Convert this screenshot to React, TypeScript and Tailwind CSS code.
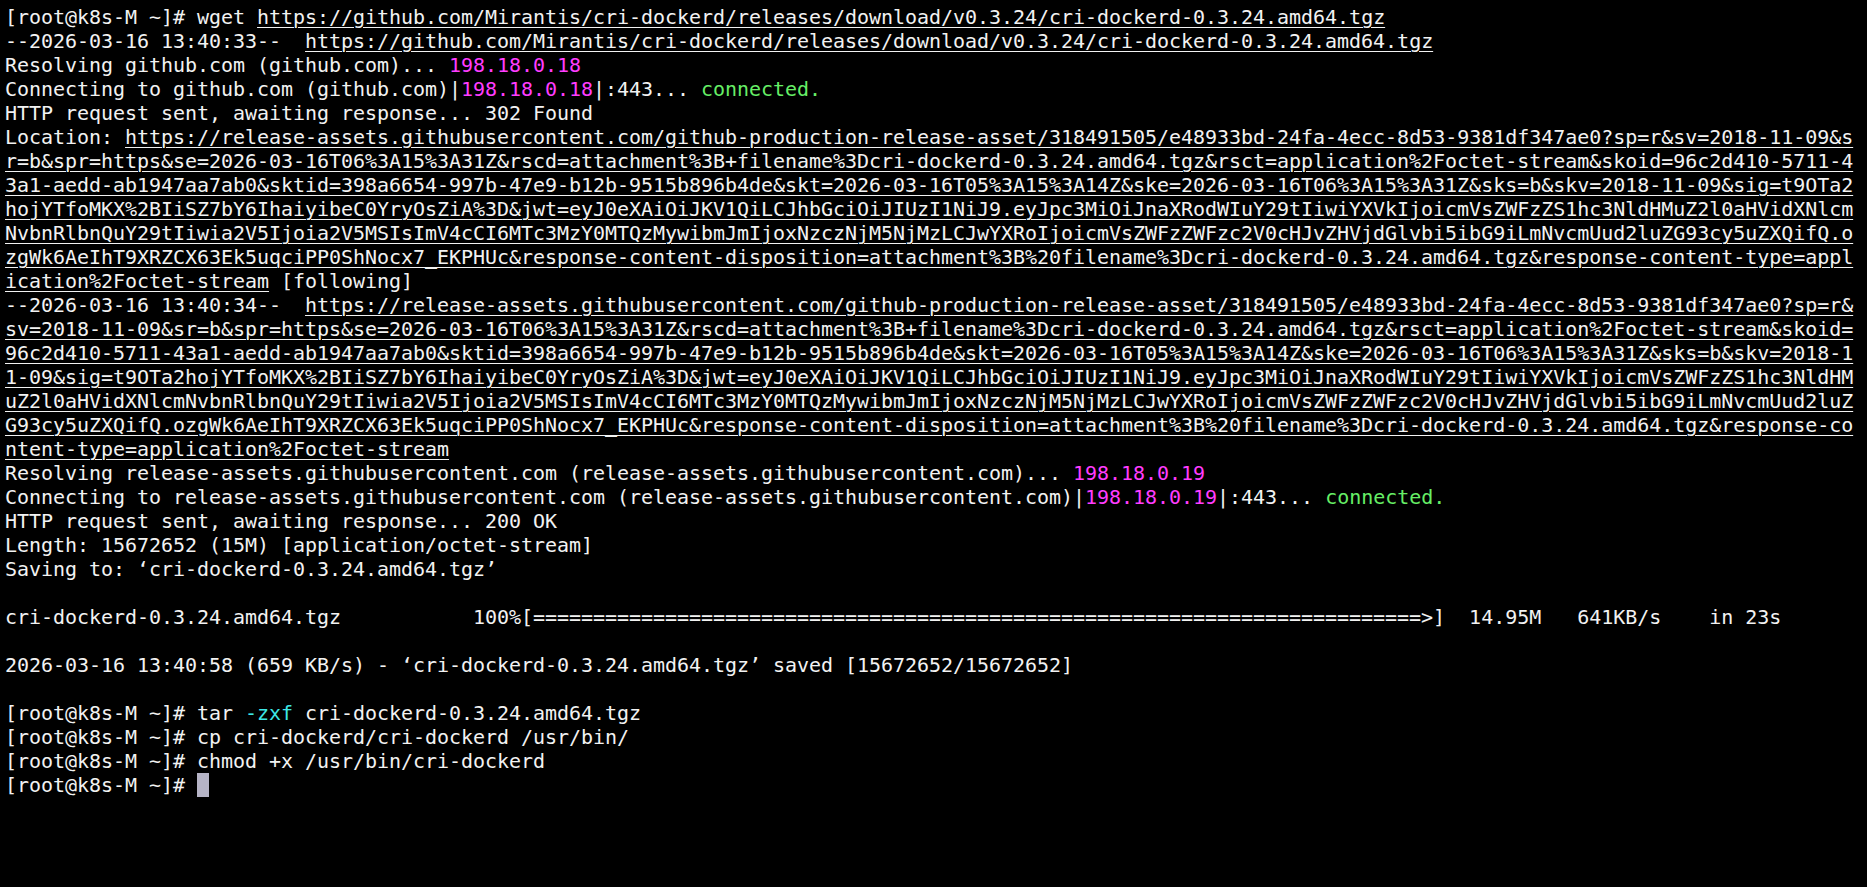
type Tone = "ip" | "ok" | "opt";

interface Seg {
    t: string;
    tone?: Tone;
    u?: boolean; // underlined link
}

const COLS = 154;
const PROMPT = "[root@k8s-M ~]# ";
const FILE = "cri-dockerd-0.3.24.amd64.tgz";

const GH_URL = `https://github.com/Mirantis/cri-dockerd/releases/download/v0.3.24/${FILE}`;

const ASSET_URL =
    "https://release-assets.githubusercontent.com/github-production-release-asset/318491505/e48933bd-24fa-4ecc-8d53-9381df347ae0" +
    "?sp=r&sv=2018-11-09&sr=b&spr=https&se=2026-03-16T06%3A15%3A31Z&rscd=attachment%3B+filename%3D" + FILE +
    "&rsct=application%2Foctet-stream&skoid=96c2d410-5711-43a1-aedd-ab1947aa7ab0&sktid=398a6654-997b-47e9-b12b-9515b896b4de" +
    "&skt=2026-03-16T05%3A15%3A14Z&ske=2026-03-16T06%3A15%3A31Z&sks=b&skv=2018-11-09&sig=t9OTa2hojYTfoMKX%2BIiSZ7bY6IhaiyibeC0YryOsZiA%3D" +
    "&jwt=eyJ0eXAiOiJKV1QiLCJhbGciOiJIUzI1NiJ9.eyJpc3MiOiJnaXRodWIuY29tIiwiYXVkIjoicmVsZWFzZS1hc3NldHMuZ2l0aHVidXNlcmNvbnRlbnQuY29tIiwia2V5Ijoia2V5MSIsImV4cCI6MTc3MzY0MTQzMywibmJmIjoxNzczNjM5NjMzLCJwYXRoIjoicmVsZWFzZWFzc2V0cHJvZHVjdGlvbi5ibG9iLmNvcmUud2luZG93cy5uZXQifQ.ozgWk6AeIhT9XRZCX63Ek5uqciPP0ShNocx7_EKPHUc" +
    "&response-content-disposition=attachment%3B%20filename%3D" + FILE +
    "&response-content-type=application%2Foctet-stream";

// break a logical line into terminal rows of COLS characters
function wrap(segs: Seg[]): Seg[][] {
    const rows: Seg[][] = [[]];
    let col = 0;
    for (const s of segs) {
        let rest = s.t;
        while (rest.length > 0) {
            if (col === COLS) {
                rows.push([]);
                col = 0;
            }
            const take = rest.slice(0, COLS - col);
            rows[rows.length - 1].push({ ...s, t: take });
            col += take.length;
            rest = rest.slice(take.length);
        }
    }
    return rows;
}

const bar = "100%[" + "=".repeat(74) + ">]";

const logical: Seg[][] = [
    [{ t: PROMPT + "wget " }, { t: GH_URL, u: true }],
    [{ t: "--2026-03-16 13:40:33--  " }, { t: GH_URL, u: true }],
    [{ t: "Resolving github.com (github.com)... " }, { t: "198.18.0.18", tone: "ip" }],
    [
        { t: "Connecting to github.com (github.com)|" },
        { t: "198.18.0.18", tone: "ip" },
        { t: "|:443... " },
        { t: "connected.", tone: "ok" },
    ],
    [{ t: "HTTP request sent, awaiting response... 302 Found" }],
    [{ t: "Location: " }, { t: ASSET_URL, u: true }, { t: " [following]" }],
    [{ t: "--2026-03-16 13:40:34--  " }, { t: ASSET_URL, u: true }],
    [
        { t: "Resolving release-assets.githubusercontent.com (release-assets.githubusercontent.com)... " },
        { t: "198.18.0.19", tone: "ip" },
    ],
    [
        { t: "Connecting to release-assets.githubusercontent.com (release-assets.githubusercontent.com)|" },
        { t: "198.18.0.19", tone: "ip" },
        { t: "|:443... " },
        { t: "connected.", tone: "ok" },
    ],
    [{ t: "HTTP request sent, awaiting response... 200 OK" }],
    [{ t: "Length: 15672652 (15M) [application/octet-stream]" }],
    [{ t: `Saving to: ‘${FILE}’` }],
    [],
    [{ t: FILE + " ".repeat(11) + bar + "  14.95M   641KB/s    in 23s" }],
    [],
    [{ t: `2026-03-16 13:40:58 (659 KB/s) - ‘${FILE}’ saved [15672652/15672652]` }],
    [],
    [{ t: PROMPT + "tar " }, { t: "-zxf", tone: "opt" }, { t: " " + FILE }],
    [{ t: PROMPT + "cp cri-dockerd/cri-dockerd /usr/bin/" }],
    [{ t: PROMPT + "chmod +x /usr/bin/cri-dockerd" }],
];

const rows = logical.flatMap(l => (l.length ? wrap(l) : [[]]));

const toneClass: Record<Tone, string> = {
    ip: "text-[#ff3dff]",
    ok: "text-[#66ee66]",
    opt: "text-[#3ee6e6]",
};

function Row({ segs }: { segs: Seg[] }) {
    return (
        <div className="h-[24px]">
            {segs.map((s, i) => (
                <span
                    key={i}
                    className={`${s.tone ? toneClass[s.tone] : ""} ${s.u ? "underline decoration-1 underline-offset-[3px]" : ""}`}
                >
                    {s.t}
                </span>
            ))}
        </div>
    );
}

export default function App() {
    return (
        <div
            className="w-full h-screen overflow-hidden bg-black text-[#f2f2f2] pl-[5px] pt-[5px] text-[20px] leading-[24px] tracking-[-0.04px] whitespace-pre"
            style={{ fontFamily: '"DejaVu Sans Mono", "Liberation Mono", monospace' }}
        >
            {rows.map((r, i) => (
                <Row key={i} segs={r} />
            ))}
            <div className="h-[24px] flex">
                <span>{PROMPT}</span>
                <span className="w-[12px] h-[24px] bg-[#b6b4c6]" />
            </div>
        </div>
    );
}
